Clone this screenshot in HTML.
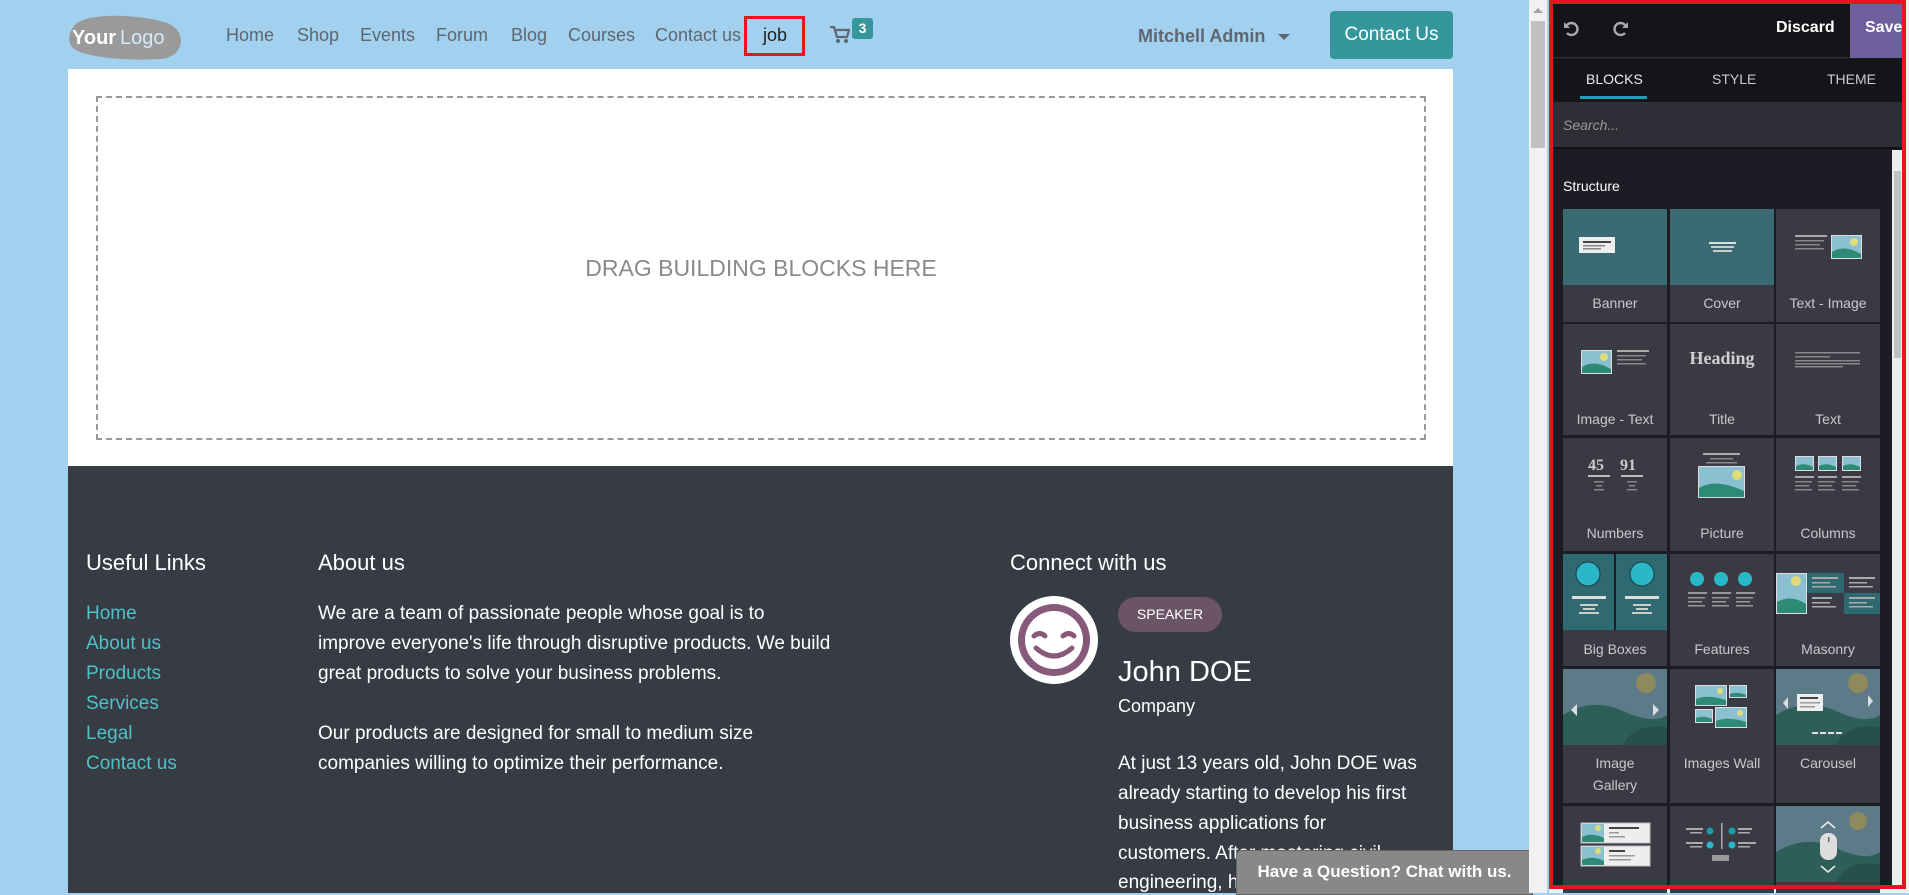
<!DOCTYPE html>
<html><head><meta charset="utf-8"><style>
*{margin:0;padding:0;box-sizing:border-box}
body{width:1909px;height:893px;overflow:hidden;background:#a1d1ee;font-family:"Liberation Sans",sans-serif;position:relative}
.abs{position:absolute}
.nav a{position:absolute;top:25px;font-size:18px;color:#5f6670;white-space:nowrap}
.ft{color:#fff}
.lk{position:absolute;left:86px;font-size:19px;color:#4fc1c6}
.pl{position:absolute;font-size:19px;color:#fff;white-space:nowrap}
.cell{position:absolute;width:104px;background:#393a44;color:#c9c9cc;font-size:14px;text-align:center}
.cell .img{height:76px;position:relative}
.cell .lb{position:absolute;left:0;right:0;line-height:22px}
</style></head><body>
<div class="abs" style="left:68px;top:0;width:1385px;height:69px;background:#a1d1ee"></div>
<svg class="abs" style="left:68px;top:14px" width="120" height="46" viewBox="0 0 120 46"><path d="M6 12 C16 -2 70 0 96 8 C122 16 116 44 92 45 C64 47 16 44 5 34 C-1 28 1 18 6 12Z" fill="#9a9a9a"/><text x="4" y="30" font-family="Liberation Sans" font-weight="bold" font-size="20" fill="#fff">Your</text><text x="52" y="30" font-family="Liberation Sans" font-size="20" fill="#d6e9f5">Logo</text></svg>
<div class="nav">
<a style="left:226px">Home</a><a style="left:297px">Shop</a><a style="left:360px">Events</a><a style="left:436px">Forum</a><a style="left:511px">Blog</a><a style="left:568px">Courses</a><a style="left:655px">Contact us</a>
<a style="left:763px;color:#222">job</a>
</div>
<div class="abs" style="left:744px;top:16px;width:61px;height:40px;border:3px solid #e8141f"></div>
<svg class="abs" style="left:830px;top:26px" width="20" height="18" viewBox="0 0 20 18"><path d="M0 1h4l3 10h10l2-7H6" fill="none" stroke="#5f6670" stroke-width="2.2"/><circle cx="8" cy="15" r="2" fill="#5f6670"/><circle cx="16" cy="15" r="2" fill="#5f6670"/></svg>
<div class="abs" style="left:852px;top:18px;width:21px;height:21px;background:#35979c;border-radius:3px;color:#fff;font-size:14px;font-weight:bold;text-align:center;line-height:21px">3</div>
<div class="abs" style="left:1138px;top:26px;font-size:18px;font-weight:bold;color:#5f6670">Mitchell Admin</div>
<div class="abs" style="left:1278px;top:34px;border:6px solid transparent;border-top:6px solid #5f6670"></div>
<div class="abs" style="left:1330px;top:11px;width:123px;height:48px;background:#35979c;border-radius:4px;color:#fff;font-size:19px;text-align:center;line-height:48px">Contact Us</div>
<div class="abs" style="left:68px;top:69px;width:1385px;height:397px;background:#fff"></div>
<div class="abs" style="left:96px;top:96px;width:1330px;height:344px;border:2px dashed #999"></div>
<div class="abs" style="left:96px;top:255px;width:1330px;text-align:center;font-size:23px;color:#8a8a8a">DRAG BUILDING BLOCKS HERE</div>
<div class="abs" style="left:68px;top:466px;width:1385px;height:427px;background:#363b44"></div>
<div class="abs ft" style="left:86px;top:550px;font-size:22px">Useful Links</div>
<div class="abs ft" style="left:318px;top:550px;font-size:22px">About us</div>
<div class="abs ft" style="left:1010px;top:550px;font-size:22px">Connect with us</div>
<div class="lk" style="top:603px">Home</div><div class="lk" style="top:633px">About us</div><div class="lk" style="top:663px">Products</div><div class="lk" style="top:693px">Services</div><div class="lk" style="top:723px">Legal</div><div class="lk" style="top:753px">Contact us</div>
<div class="pl" style="left:318px;top:603px">We are a team of passionate people whose goal is to</div>
<div class="pl" style="left:318px;top:633px">improve everyone's life through disruptive products. We build</div>
<div class="pl" style="left:318px;top:663px">great products to solve your business problems.</div>
<div class="pl" style="left:318px;top:723px">Our products are designed for small to medium size</div>
<div class="pl" style="left:318px;top:753px">companies willing to optimize their performance.</div>
<svg class="abs" style="left:1010px;top:596px" width="88" height="88" viewBox="0 0 88 88"><circle cx="44" cy="44" r="44" fill="#fff"/><circle cx="44" cy="44" r="36" fill="#875a7b"/><circle cx="44" cy="44" r="29" fill="#fff"/><path d="M24 40q6-5 11 0M53 40q6-5 11 0M26 52q18 16 36 0" fill="none" stroke="#875a7b" stroke-width="5" stroke-linecap="round"/></svg>
<div class="abs" style="left:1118px;top:597px;width:104px;height:35px;border-radius:18px;background:#6a5466;color:#fff;font-size:14px;text-align:center;line-height:35px">SPEAKER</div>
<div class="abs ft" style="left:1118px;top:656px;font-size:29px">John DOE</div>
<div class="abs ft" style="left:1118px;top:696px;font-size:18px">Company</div>
<div class="pl" style="left:1118px;top:753px">At just 13 years old, John DOE was</div>
<div class="pl" style="left:1118px;top:783px">already starting to develop his first</div>
<div class="pl" style="left:1118px;top:813px">business applications for</div>
<div class="pl" style="left:1118px;top:843px">customers. After mastering civil</div>
<div class="pl" style="left:1118px;top:872px">engineering, he</div>
<div class="abs" style="left:1236px;top:850px;width:297px;height:45px;background:#888;border:1px solid #666;border-radius:5px 5px 0 0;color:#fff;font-weight:bold;font-size:17px;text-align:center;line-height:42px">Have a Question? Chat with us.</div>
<div class="abs" style="left:1529px;top:0;width:18px;height:893px;background:#f1f1f1"></div>
<div class="abs" style="left:1531px;top:21px;width:14px;height:127px;background:#c1c1c1"></div>
<div class="abs" style="left:1533px;top:8px;border:5px solid transparent;border-bottom:5px solid #a3a3a3;border-top:0"></div>
<div class="abs" style="left:1549px;top:0;width:360px;height:893px;background:#f0f0f0"></div>
<div class="abs" style="left:1553px;top:4px;width:349px;height:881px;background:#1b1c24"></div>
<div class="abs" style="left:1553px;top:4px;width:349px;height:54px;background:#141419;border-bottom:1px solid #333"></div>
<svg class="abs" style="left:1563px;top:20px" width="18" height="18" viewBox="0 0 18 18"><path d="M4 5a6 6 0 1 1 0 8" fill="none" stroke="#aaa" stroke-width="2.4"/><path d="M1 2v6h6z" fill="#aaa"/></svg>
<svg class="abs" style="left:1611px;top:20px" width="18" height="18" viewBox="0 0 18 18"><path d="M14 5a6 6 0 1 0 0 8" fill="none" stroke="#aaa" stroke-width="2.4"/><path d="M17 2v6h-6z" fill="#aaa"/></svg>
<div class="abs" style="left:1776px;top:19px;color:#fff;font-size:16px;font-weight:bold">Discard</div>
<div class="abs" style="left:1850px;top:4px;width:52px;height:54px;background:#6f5f9c;color:#fff;font-size:16px;font-weight:bold;line-height:48px;padding-left:15px">Save</div>
<div class="abs" style="left:1553px;top:59px;width:349px;height:43px;background:#141419"></div>
<div class="abs" style="left:1586px;top:71px;color:#eee;font-size:14px">BLOCKS</div>
<div class="abs" style="left:1580px;top:96px;width:67px;height:3px;background:#17a2b8"></div>
<div class="abs" style="left:1712px;top:71px;color:#ccc;font-size:14px">STYLE</div>
<div class="abs" style="left:1827px;top:71px;color:#ccc;font-size:14px">THEME</div>
<div class="abs" style="left:1553px;top:102px;width:349px;height:47px;background:#2d2e36;border-bottom:2px solid #111"></div>
<div class="abs" style="left:1563px;top:117px;color:#999;font-size:14px;font-style:italic">Search...</div>
<div class="abs" style="left:1892px;top:150px;width:10px;height:735px;background:#eee"></div>
<div class="abs" style="left:1894px;top:171px;width:7px;height:187px;background:#c1c1c1"></div>
<div class="abs" style="left:1563px;top:178px;color:#fff;font-size:14px">Structure</div>

<div class="cell" style="left:1563px;top:209px;height:113px"><div class="img" style="background:#3a6a72"><svg width="104" height="76"><rect x="16" y="28" width="36" height="16" fill="#eee"/><rect x="20" y="32" width="28" height="2" fill="#444"/><rect x="20" y="36" width="22" height="1.5" fill="#888"/><rect x="20" y="39" width="18" height="1.5" fill="#888"/></svg></div><div class="lb" style="top:83px">Banner</div></div>
<div class="cell" style="left:1670px;top:209px;height:113px"><div class="img" style="background:#3a6a72"><svg width="104" height="76"><rect x="39" y="33" width="27" height="2" fill="#ddd"/><rect x="41" y="37" width="23" height="2" fill="#ccc"/><rect x="43" y="41" width="19" height="2" fill="#ccc"/></svg></div><div class="lb" style="top:83px">Cover</div></div>
<div class="cell" style="left:1776px;top:209px;height:113px"><div class="img"><svg width="104" height="76"><rect x="19" y="26" width="32" height="2" fill="#aaa"/><rect x="19" y="31" width="29" height="1.5" fill="#888"/><rect x="19" y="35" width="25" height="1.5" fill="#888"/><rect x="19" y="39" width="29" height="1.5" fill="#888"/><rect x="55" y="26" width="31" height="24" fill="#ddd"/><rect x="56" y="27" width="29" height="22" fill="#8ac0d0"/><path d="M56 43q12-8 29 2v4H56z" fill="#2e8a76"/><circle cx="78" cy="33" r="4" fill="#e0dc7a"/></svg></div><div class="lb" style="top:83px">Text - Image</div></div>
<div class="cell" style="left:1563px;top:324px;height:111px"><div class="img"><svg width="104" height="76"><rect x="18" y="26" width="31" height="24" fill="#ddd"/><rect x="19" y="27" width="29" height="22" fill="#8ac0d0"/><path d="M19 43q12-8 29 2v4H19z" fill="#2e8a76"/><circle cx="41" cy="33" r="4" fill="#e0dc7a"/><rect x="54" y="26" width="32" height="2" fill="#aaa"/><rect x="54" y="31" width="29" height="1.5" fill="#888"/><rect x="54" y="35" width="25" height="1.5" fill="#888"/><rect x="54" y="39" width="29" height="1.5" fill="#888"/></svg></div><div class="lb" style="top:84px">Image - Text</div></div>
<div class="cell" style="left:1670px;top:324px;height:111px"><div class="img"><div style="position:absolute;top:24px;width:104px;font-family:'Liberation Serif',serif;font-weight:bold;font-size:18px;color:#d0d0d0">Heading</div></div><div class="lb" style="top:84px">Title</div></div>
<div class="cell" style="left:1776px;top:324px;height:111px"><div class="img"><svg width="104" height="76"><rect x="19" y="28" width="65" height="1.5" fill="#888"/><rect x="19" y="32" width="35" height="1.5" fill="#888"/><rect x="19" y="36" width="65" height="1.5" fill="#888"/><rect x="19" y="39" width="65" height="1.5" fill="#888"/><rect x="19" y="42" width="48" height="1.5" fill="#888"/></svg></div><div class="lb" style="top:84px">Text</div></div>
<div class="cell" style="left:1563px;top:438px;height:113px"><div class="img"><svg width="104" height="76"><text x="25" y="32" font-family="Liberation Serif" font-weight="bold" font-size="16" fill="#ccc">45</text><text x="57" y="32" font-family="Liberation Serif" font-weight="bold" font-size="16" fill="#ccc">91</text><rect x="25" y="37" width="22" height="2" fill="#bbb"/><rect x="58" y="37" width="22" height="2" fill="#bbb"/><rect x="31" y="43" width="10" height="1.5" fill="#888"/><rect x="33" y="47" width="6" height="1.5" fill="#888"/><rect x="31" y="51" width="10" height="1.5" fill="#888"/><rect x="64" y="43" width="10" height="1.5" fill="#888"/><rect x="66" y="47" width="6" height="1.5" fill="#888"/><rect x="64" y="51" width="10" height="1.5" fill="#888"/></svg></div><div class="lb" style="top:84px">Numbers</div></div>
<div class="cell" style="left:1670px;top:438px;height:113px"><div class="img"><svg width="104" height="76"><rect x="33" y="15" width="37" height="2" fill="#aaa"/><rect x="40" y="20" width="23" height="1.5" fill="#888"/><rect x="36" y="24" width="31" height="1.5" fill="#888"/><rect x="28" y="28" width="47" height="32" fill="#ddd"/><rect x="29" y="29" width="45" height="30" fill="#8ac0d0"/><path d="M29 50q16-10 45 3v6H29z" fill="#2e8a76"/><circle cx="67" cy="37" r="5" fill="#e0dc7a"/></svg></div><div class="lb" style="top:84px">Picture</div></div>
<div class="cell" style="left:1776px;top:438px;height:113px"><div class="img"><svg width="104" height="76"><g><rect x="19" y="18" width="19" height="15" fill="#ddd"/><rect x="20" y="19" width="17" height="13" fill="#8ac0d0"/><path d="M20 28q8-4 17 1v3H20z" fill="#2e8a76"/><rect x="19" y="38" width="19" height="2" fill="#aaa"/><rect x="19" y="43" width="17" height="1.5" fill="#888"/><rect x="19" y="47" width="14" height="1.5" fill="#888"/><rect x="19" y="51" width="17" height="1.5" fill="#888"/></g><g transform="translate(23,0)"><rect x="19" y="18" width="19" height="15" fill="#ddd"/><rect x="20" y="19" width="17" height="13" fill="#8ac0d0"/><path d="M20 28q8-4 17 1v3H20z" fill="#2e8a76"/><rect x="19" y="38" width="19" height="2" fill="#aaa"/><rect x="19" y="43" width="17" height="1.5" fill="#888"/><rect x="19" y="47" width="14" height="1.5" fill="#888"/><rect x="19" y="51" width="17" height="1.5" fill="#888"/></g><g transform="translate(47,0)"><rect x="19" y="18" width="19" height="15" fill="#ddd"/><rect x="20" y="19" width="17" height="13" fill="#8ac0d0"/><path d="M20 28q8-4 17 1v3H20z" fill="#2e8a76"/><rect x="19" y="38" width="19" height="2" fill="#aaa"/><rect x="19" y="43" width="17" height="1.5" fill="#888"/><rect x="19" y="47" width="14" height="1.5" fill="#888"/><rect x="19" y="51" width="17" height="1.5" fill="#888"/></g></svg></div><div class="lb" style="top:84px">Columns</div></div>
<div class="cell" style="left:1563px;top:554px;height:112px"><div class="img" style="background:#1b1c24"><svg width="104" height="76"><rect x="0" y="0" width="51" height="76" fill="#2f6a72"/><rect x="53" y="0" width="51" height="76" fill="#2f6a72"/><circle cx="25" cy="20" r="12" fill="#2ab8c8" stroke="#1d3c44" stroke-width="1"/><circle cx="79" cy="20" r="12" fill="#2ab8c8" stroke="#1d3c44" stroke-width="1"/><rect x="9" y="42" width="34" height="3" fill="#ddd"/><rect x="17" y="50" width="18" height="2" fill="#ccc"/><rect x="20" y="54" width="12" height="2" fill="#ccc"/><rect x="16" y="58" width="20" height="2" fill="#ccc"/><rect x="62" y="42" width="34" height="3" fill="#ddd"/><rect x="70" y="50" width="18" height="2" fill="#ccc"/><rect x="73" y="54" width="12" height="2" fill="#ccc"/><rect x="69" y="58" width="20" height="2" fill="#ccc"/></svg></div><div class="lb" style="top:84px">Big Boxes</div></div>
<div class="cell" style="left:1670px;top:554px;height:112px"><div class="img"><svg width="104" height="76"><circle cx="27" cy="25" r="7" fill="#2ab8c8"/><circle cx="51" cy="25" r="7" fill="#2ab8c8"/><circle cx="75" cy="25" r="7" fill="#2ab8c8"/><g fill="#999"><rect x="18" y="38" width="19" height="2"/><rect x="18" y="43" width="17" height="1.5"/><rect x="18" y="47" width="14" height="1.5"/><rect x="18" y="51" width="17" height="1.5"/><rect x="42" y="38" width="19" height="2"/><rect x="42" y="43" width="17" height="1.5"/><rect x="42" y="47" width="14" height="1.5"/><rect x="42" y="51" width="17" height="1.5"/><rect x="66" y="38" width="19" height="2"/><rect x="66" y="43" width="17" height="1.5"/><rect x="66" y="47" width="14" height="1.5"/><rect x="66" y="51" width="17" height="1.5"/></g></svg></div><div class="lb" style="top:84px">Features</div></div>
<div class="cell" style="left:1776px;top:554px;height:112px"><div class="img"><svg width="104" height="76"><rect x="0" y="19" width="31" height="41" fill="#ddd"/><rect x="1" y="20" width="29" height="39" fill="#8ac0d0"/><path d="M1 48q14-8 29 2v9H1z" fill="#2e8a76"/><circle cx="20" cy="27" r="5" fill="#e0dc7a"/><rect x="31" y="19" width="37" height="20" fill="#2f6a72"/><rect x="68" y="19" width="36" height="20" fill="#3a3b44"/><rect x="31" y="39" width="37" height="21" fill="#3a3b44"/><rect x="68" y="39" width="36" height="21" fill="#2f6a72"/><g fill="#aaa"><rect x="36" y="23" width="26" height="2"/><rect x="36" y="28" width="18" height="1.5"/><rect x="36" y="32" width="24" height="1.5"/><rect x="73" y="23" width="26" height="2"/><rect x="73" y="28" width="18" height="1.5"/><rect x="73" y="32" width="24" height="1.5"/><rect x="36" y="43" width="20" height="2"/><rect x="36" y="48" width="18" height="1.5"/><rect x="36" y="52" width="24" height="1.5"/><rect x="73" y="43" width="26" height="2"/><rect x="73" y="48" width="18" height="1.5"/><rect x="73" y="52" width="24" height="1.5"/></g></svg></div><div class="lb" style="top:84px">Masonry</div></div>
<div class="cell" style="left:1563px;top:669px;height:134px"><div class="img" style="background:#5c7a88"><svg width="104" height="76"><path d="M0 46q30-18 60-4t44 4v30H0z" fill="#2e5e58"/><path d="M60 76q10-22 44-18v18z" fill="#27504b"/><circle cx="83" cy="14" r="10" fill="#8e8a5e"/><path d="M14 35l-6 6 6 6z" fill="#ddd"/><path d="M90 35l6 6-6 6z" fill="#ddd"/></svg></div><div class="lb" style="top:83px">Image<br>Gallery</div></div>
<div class="cell" style="left:1670px;top:669px;height:134px"><div class="img"><svg width="104" height="76"><g><rect x="25" y="16" width="32" height="21" fill="#ddd"/><rect x="26" y="17" width="30" height="19" fill="#8ac0d0"/><path d="M26 30q12-5 30 1v5H26z" fill="#2e8a76"/><circle cx="50" cy="22" r="3" fill="#e0dc7a"/><rect x="59" y="16" width="18" height="13" fill="#ddd"/><rect x="60" y="17" width="16" height="11" fill="#8ac0d0"/><path d="M60 25q7-3 16 1v2H60z" fill="#2e8a76"/><rect x="25" y="40" width="18" height="14" fill="#ddd"/><rect x="26" y="41" width="16" height="12" fill="#8ac0d0"/><path d="M26 49q7-3 16 1v3H26z" fill="#2e8a76"/><rect x="45" y="38" width="32" height="21" fill="#ddd"/><rect x="46" y="39" width="30" height="19" fill="#8ac0d0"/><path d="M46 52q12-5 30 1v5H46z" fill="#2e8a76"/><circle cx="70" cy="44" r="3" fill="#e0dc7a"/></g></svg></div><div class="lb" style="top:83px">Images Wall</div></div>
<div class="cell" style="left:1776px;top:669px;height:134px"><div class="img" style="background:#5c7a88"><svg width="104" height="76"><path d="M0 46q30-18 60-4t44 4v30H0z" fill="#2e5e58"/><path d="M60 76q10-22 44-18v18z" fill="#27504b"/><circle cx="82" cy="14" r="10" fill="#8e8a5e"/><rect x="21" y="25" width="26" height="17" fill="#eee"/><rect x="24" y="28" width="18" height="2" fill="#444"/><rect x="24" y="33" width="20" height="1.5" fill="#999"/><rect x="24" y="37" width="15" height="1.5" fill="#999"/><path d="M12 28l-5 6 5 6z" fill="#ddd"/><path d="M92 26l5 6-5 6z" fill="#ddd"/><g fill="#ddd"><rect x="36" y="63" width="6" height="2"/><rect x="44" y="63" width="6" height="2"/><rect x="52" y="63" width="6" height="2"/><rect x="60" y="63" width="6" height="2"/></g></svg></div><div class="lb" style="top:83px">Carousel</div></div>
<div class="cell" style="left:1563px;top:806px;height:87px"><div class="img"><svg width="104" height="76"><g><rect x="18" y="17" width="69" height="20" fill="#eee" stroke="#bbb"/><rect x="19" y="18" width="22" height="18" fill="#8ac0d0"/><path d="M19 31q10-5 22 1v4H19z" fill="#2e8a76"/><circle cx="35" cy="22" r="3" fill="#e0dc7a"/><rect x="46" y="21" width="30" height="2" fill="#444"/><rect x="46" y="26" width="10" height="1.5" fill="#999"/><rect x="46" y="30" width="16" height="1.5" fill="#999"/></g><g transform="translate(0,23)"><rect x="18" y="17" width="69" height="20" fill="#eee" stroke="#bbb"/><rect x="19" y="18" width="22" height="18" fill="#8ac0d0"/><path d="M19 31q10-5 22 1v4H19z" fill="#2e8a76"/><circle cx="35" cy="22" r="3" fill="#e0dc7a"/><rect x="46" y="21" width="16" height="2" fill="#444"/><rect x="46" y="26" width="26" height="1.5" fill="#999"/><rect x="46" y="30" width="22" height="1.5" fill="#999"/></g></svg></div></div>
<div class="cell" style="left:1670px;top:806px;height:87px"><div class="img"><svg width="104" height="76"><g fill="#aaa"><rect x="16" y="22" width="17" height="2"/><rect x="20" y="26" width="12" height="1.5"/><rect x="16" y="36" width="17" height="2"/><rect x="20" y="40" width="12" height="1.5"/><rect x="68" y="22" width="14" height="2"/><rect x="68" y="26" width="12" height="1.5"/><rect x="68" y="36" width="18" height="2"/><rect x="68" y="40" width="12" height="1.5"/><rect x="51" y="17" width="1.5" height="26"/><rect x="42" y="49" width="17" height="6" fill="#999"/></g><circle cx="40" cy="25" r="3.5" fill="#1f9aa6"/><circle cx="40" cy="39" r="3.5" fill="#2ab8c8"/><circle cx="62" cy="25" r="3.5" fill="#1f9aa6"/><circle cx="62" cy="39" r="3.5" fill="#2ab8c8"/></svg></div></div>
<div class="cell" style="left:1776px;top:806px;height:87px"><div class="img" style="background:#5c7a88"><svg width="104" height="76"><path d="M0 46q30-18 60-4t44 4v30H0z" fill="#2e5e58"/><path d="M60 76q10-22 44-18v18z" fill="#27504b"/><circle cx="82" cy="15" r="9" fill="#8e8a5e"/><path d="M45 22l7-6 7 6M45 60l7 6 7-6" fill="none" stroke="#eee" stroke-width="1.5"/><rect x="44" y="27" width="17" height="27" rx="8" fill="#ddd"/><rect x="52" y="31" width="1.5" height="5" fill="#666"/></svg></div></div>
<div class="abs" style="left:1549px;top:0;width:357px;height:889px;border:4px solid #e8141f"></div>
</body></html>
